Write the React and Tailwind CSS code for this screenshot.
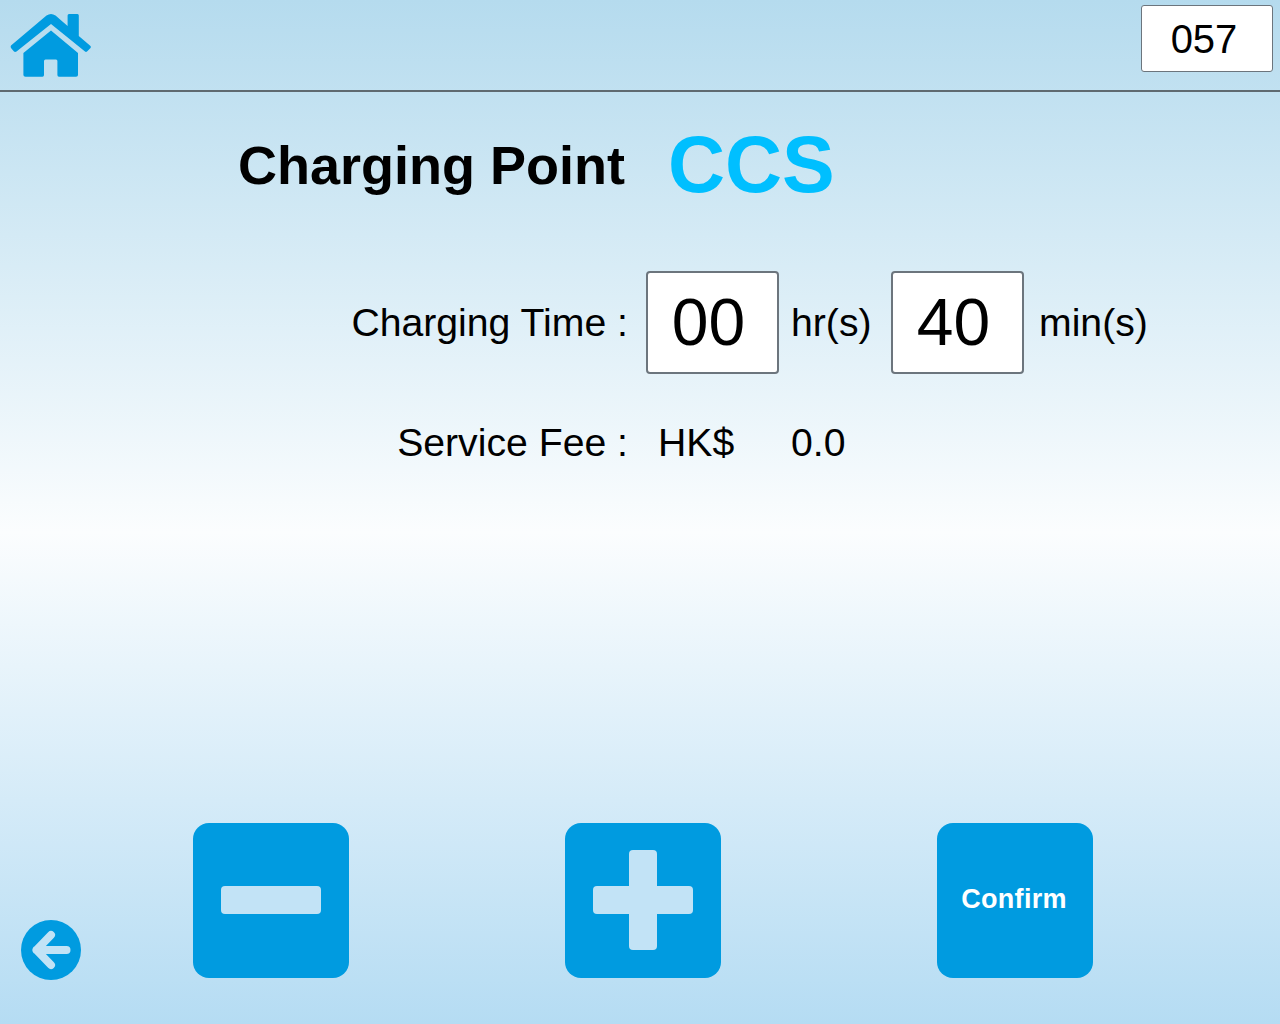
const pageFont = { fontFamily: '"Liberation Sans", Arial, sans-serif' }

function HomeIcon() {
  return (
    <svg width="82" height="66" viewBox="0 0 82 66" fill="#009be0">
      {/* roof */}
      <path d="M1 33.5 L36.5 3.5 Q41 0.5 45.5 3.5 L57.6 14 V3.5 Q57.6 2 59 2 H67.5 Q68.8 2 68.8 3.5 V24 L80.5 34 Q81.3 35 80.5 36 L77 39.6 Q76 40.4 75 39.6 L41 12 L6.5 39.6 Q5 40.4 4 39.6 L1 36 Q0.2 34.8 1 33.5 Z" />
      {/* body */}
      <path d="M41 18.6 L68 41 V63 Q68 64.8 66 64.8 H49 Q47.4 64.8 47.4 63 V49 Q47.4 47.4 46 47.4 H35.5 Q34 47.4 34 49 V63 Q34 64.8 32.5 64.8 H15.5 Q13.4 64.8 13.4 63 V41 Z" />
    </svg>
  )
}

function BackIcon() {
  return (
    <svg width="60" height="60" viewBox="0 0 60 60">
      <circle cx="30" cy="30" r="30" fill="#009be0" />
      <path d="M30 15 L15.5 30 L30 45 M15.5 30 H45.5" fill="none" stroke="#c2e3f6" strokeWidth="8" strokeLinecap="round" strokeLinejoin="round" />
    </svg>
  )
}

function SquareButton({ children }) {
  return (
    <button className="w-[156px] h-[155px] rounded-[16px] bg-[#009be0] relative flex items-center justify-center shrink-0">
      {children}
    </button>
  )
}

function ValueBox({ value }) {
  return (
    <div className="w-[133px] h-[103px] bg-white border-2 border-[#6c757d] rounded-[4px] flex items-center justify-center text-[66px] text-black pr-[8px]">
      {value}
    </div>
  )
}

export default function App() {
  return (
    <div
      style={pageFont}
      className="w-[1280px] h-[1024px] overflow-hidden flex flex-col text-black bg-[linear-gradient(to_bottom,#b5dbee_0%,#fbfdfe_52%,#b5dcf3_100%)]"
    >
      {/* Top bar */}
      <div className="h-[92px] shrink-0 border-b-2 border-[#5f6a70] flex justify-between pl-[10px] pr-[7px]">
        <div className="pt-[12px]">
          <HomeIcon />
        </div>
        <div className="mt-[5px] w-[132px] h-[67px] bg-white border border-[#6c757d] rounded-[3px] flex items-center justify-center text-[40px] pr-[6px]">
          057
        </div>
      </div>

      {/* Title */}
      <div className="flex items-center pl-[238px] mt-[28px] h-[90px]">
        <span className="text-[54px] font-bold w-[430px]">Charging Point</span>
        <span className="text-[79px] font-bold text-[#00bfff]">CCS</span>
      </div>

      {/* Charging time */}
      <div className="flex items-center mt-[61px] text-[39.2px]">
        <span className="w-[628px] text-right pt-[2px]">Charging Time :</span>
        <div className="ml-[18px]"><ValueBox value="00" /></div>
        <span className="ml-[12px] w-[100px] pt-[2px]">hr(s)</span>
        <ValueBox value="40" />
        <span className="ml-[15px] pt-[2px]">min(s)</span>
      </div>

      {/* Service fee */}
      <div className="flex items-center mt-[40px] text-[39.2px]">
        <span className="w-[628px] text-right">Service Fee :</span>
        <span className="ml-[30px] w-[133px]">HK$</span>
        <span>0.0</span>
      </div>

      {/* Bottom actions */}
      <div className="mt-auto mb-[46px] pl-[21px] flex items-end">
        <div className="w-[172px] shrink-0 -mb-[2px]">
          <BackIcon />
        </div>
        <div className="flex gap-[216px]">
          <SquareButton>
            <span className="w-[100px] h-[28px] rounded-[4px] bg-[#c2e3f6] mb-[2px]" />
          </SquareButton>
          <SquareButton>
            <span className="w-[100px] h-[28px] rounded-[4px] bg-[#c2e3f6] mb-[2px]" />
            <span className="absolute left-[64px] top-[27px] w-[28px] h-[100px] rounded-[4px] bg-[#c2e3f6]" />
          </SquareButton>
          <SquareButton>
            <span className="text-white font-bold text-[27px] tracking-[0.3px] pr-[2px] pb-[2px]">Confirm</span>
          </SquareButton>
        </div>
      </div>
    </div>
  )
}
